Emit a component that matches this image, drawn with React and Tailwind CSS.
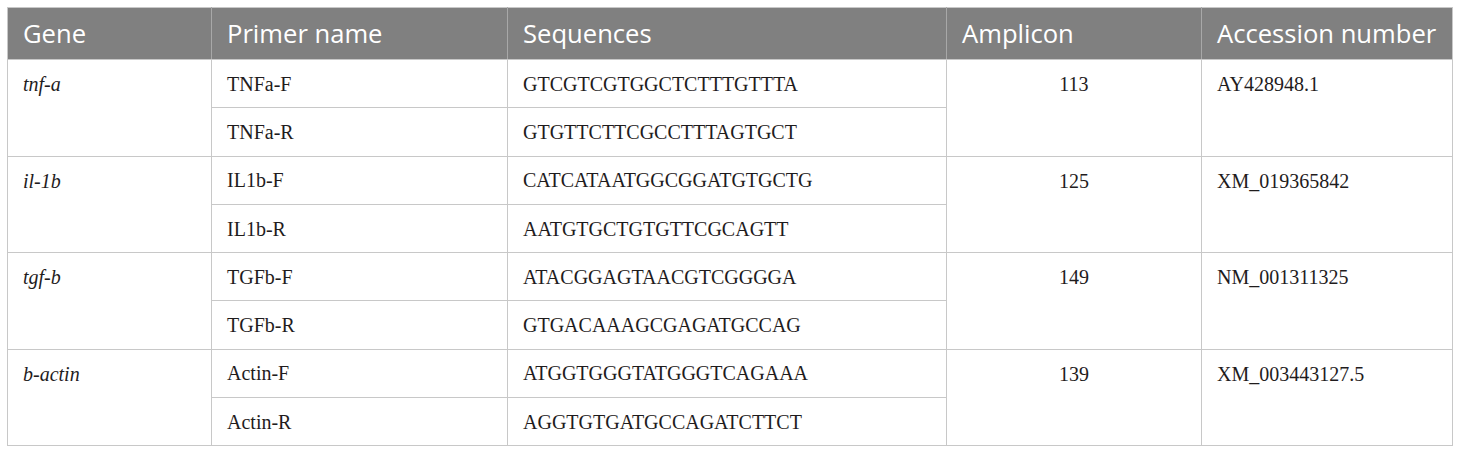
import React from "react";

const rows = [
  { gene: "tnf-a", primers: [["TNFa-F", "GTCGTCGTGGCTCTTTGTTTA"], ["TNFa-R", "GTGTTCTTCGCCTTTAGTGCT"]], amp: "113", acc: "AY428948.1" },
  { gene: "il-1b", primers: [["IL1b-F", "CATCATAATGGCGGATGTGCTG"], ["IL1b-R", "AATGTGCTGTGTTCGCAGTT"]], amp: "125", acc: "XM_019365842" },
  { gene: "tgf-b", primers: [["TGFb-F", "ATACGGAGTAACGTCGGGGA"], ["TGFb-R", "GTGACAAAGCGAGATGCCAG"]], amp: "149", acc: "NM_001311325" },
  { gene: "b-actin", primers: [["Actin-F", "ATGGTGGGTATGGGTCAGAAA"], ["Actin-R", "AGGTGTGATGCCAGATCTTCT"]], amp: "139", acc: "XM_003443127.5" },
];

const th = "border border-[#a8a8a8] border-b-[#c8c8c8] pl-[15px] pr-[4px] text-left font-normal whitespace-nowrap";
const td = "border border-[#c8c8c8] px-[15px]";

export default function App() {
  return (
    <div className="bg-white w-[1460px] h-[454px] pt-[7px] pl-[7px]">
      <table
        className="border-collapse table-fixed w-[1445px] text-[#1f1c1d]"
        style={{ fontFamily: "'Liberation Serif', 'Times New Roman', serif" }}
      >
        <colgroup>
          <col className="w-[204px]" />
          <col className="w-[296px]" />
          <col className="w-[439px]" />
          <col className="w-[255px]" />
          <col className="w-[251px]" />
        </colgroup>
        <thead>
          <tr
            className="h-[52px] bg-[#808080] text-white text-[25.6px] leading-none"
            style={{ fontFamily: "'Open Sans', sans-serif" }}
          >
            <th className={th + " border-t-[#c8c8c8] border-l-[#c8c8c8]"}>Gene</th>
            <th className={th + " border-t-[#c8c8c8]"}>Primer name</th>
            <th className={th + " border-t-[#c8c8c8]"}>Sequences</th>
            <th className={th + " border-t-[#c8c8c8]"}>Amplicon</th>
            <th className={th + " border-t-[#c8c8c8] border-r-[#c8c8c8]"}>Accession number</th>
          </tr>
        </thead>
        <tbody className="text-[20px] leading-none">
          {rows.map((r) => (
            <React.Fragment key={r.gene}>
              <tr className="h-[48.3px]">
                <td rowSpan={2} className={td + " align-top"}>
                  <div className="h-[48px] flex items-center italic">{r.gene}</div>
                </td>
                <td className={td}>{r.primers[0][0]}</td>
                <td className={td}>{r.primers[0][1]}</td>
                <td rowSpan={2} className={td + " align-top text-center"}>
                  <div className="h-[48px] flex items-center justify-center">{r.amp}</div>
                </td>
                <td rowSpan={2} className={td + " align-top"}>
                  <div className="h-[48px] flex items-center">{r.acc}</div>
                </td>
              </tr>
              <tr className="h-[48.3px]">
                <td className={td}>{r.primers[1][0]}</td>
                <td className={td}>{r.primers[1][1]}</td>
              </tr>
            </React.Fragment>
          ))}
        </tbody>
      </table>
    </div>
  );
}
